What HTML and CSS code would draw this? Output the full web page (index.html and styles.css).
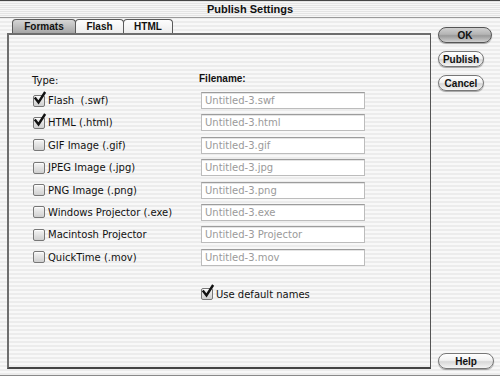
FILE: index.html
```html
<!DOCTYPE html>
<html>
<head>
    <meta charset="UTF-8" />
    <title>Publish Settings</title>
    <link rel="stylesheet" href="styles.css">
</head>

<body>
    <div class="window">
        <div class="title-bar">Publish Settings</div>

        <div class="window-main">
            <div class="tab-area">
                <div class="tab-row">
                    <div class="tab selected">Formats</div>
                    <div class="tab">Flash</div>
                    <div class="tab">HTML</div>
                </div>

                <div class="tab-pane">
                    <div class="format-grid">
                        <div class="col-label">Type:</div>
                        <div class="col-label file-label">Filename:</div>

                        <div class="type-item"><span class="check on"><svg viewBox="0 0 14 14"><path d="M2.5 6.5 L5.5 10.5 L11.5 1" /></svg></span>Flash&nbsp; (.swf)</div>
                        <div class="file-box">Untitled-3.swf</div>

                        <div class="type-item"><span class="check on"><svg viewBox="0 0 14 14"><path d="M2.5 6.5 L5.5 10.5 L11.5 1" /></svg></span>HTML (.html)</div>
                        <div class="file-box">Untitled-3.html</div>

                        <div class="type-item"><span class="check"></span>GIF Image (.gif)</div>
                        <div class="file-box">Untitled-3.gif</div>

                        <div class="type-item"><span class="check"></span>JPEG Image (.jpg)</div>
                        <div class="file-box">Untitled-3.jpg</div>

                        <div class="type-item"><span class="check"></span>PNG Image (.png)</div>
                        <div class="file-box">Untitled-3.png</div>

                        <div class="type-item"><span class="check"></span>Windows Projector (.exe)</div>
                        <div class="file-box">Untitled-3.exe</div>

                        <div class="type-item"><span class="check"></span>Macintosh Projector</div>
                        <div class="file-box">Untitled-3 Projector</div>

                        <div class="type-item"><span class="check"></span>QuickTime (.mov)</div>
                        <div class="file-box">Untitled-3.mov</div>
                    </div>

                    <div class="default-names"><span class="check on"><svg viewBox="0 0 14 14"><path d="M2.5 6.5 L5.5 10.5 L11.5 1" /></svg></span>Use default names</div>
                </div>
            </div>

            <div class="side-buttons">
                <button class="aqua-btn default">OK</button>
                <button class="aqua-btn">Publish</button>
                <button class="aqua-btn">Cancel</button>
                <button class="aqua-btn help-btn">Help</button>
            </div>
        </div>
    </div>
</body>
</html>
```

FILE: styles.css
```css
* {
    margin: 0;
    padding: 0;
    box-sizing: border-box;
    font-family: "DejaVu Sans", "Liberation Sans", sans-serif;
}

body {
    width: 500px;
    height: 376px;
    overflow: hidden;
    background: #fff;
}

.window {
    width: 500px;
    height: 376px;
    display: flex;
    flex-direction: column;
    border-top: 1px solid #444;
    border-bottom: 1px solid #8a8a8a;
    background: repeating-linear-gradient(to bottom, #ececec 0, #ececec 2px, #f8f8f8 2px, #f8f8f8 4px);
}

.title-bar {
    height: 17px;
    line-height: 16px;
    text-align: center;
    font-family: "Liberation Sans", Arial, sans-serif;
    font-size: 11px;
    font-weight: bold;
    color: #111;
    border-bottom: 1px solid #9a9a9a;
    background: repeating-linear-gradient(to bottom, #e4e4e4 0, #e4e4e4 1px, #f6f6f6 1px, #f6f6f6 2px);
}

.window-main {
    flex: 1;
    display: flex;
    padding-bottom: 6px;
}

.tab-area {
    width: 431px;
    display: flex;
    flex-direction: column;
    padding-left: 7px;
    padding-top: 1px;
}

.tab-row {
    display: flex;
    padding-left: 5px;
    height: 14px;
}

.tab {
    height: 14px;
    font-family: "Liberation Sans", Arial, sans-serif;
    font-size: 10px;
    font-weight: bold;
    line-height: 14px;
    text-align: center;
    color: #111;
    border: 1px solid #5a5a5a;
    border-bottom: none;
    border-radius: 4px 4px 0 0;
    background: linear-gradient(to bottom, #fdfdfd, #ececec);
    margin-right: -1px;
}

.tab.selected {
    width: 64px;
    background: linear-gradient(to bottom, #d6d6d6, #a6a6a6);
}

.tab-row .tab:nth-child(2) {
    width: 49px;
}

.tab-row .tab:nth-child(3) {
    width: 50px;
}

.tab-pane {
    flex: 1;
    border-top: 2px solid #6e6e6e;
    border-left: 2px solid #6e6e6e;
    border-right: 1px solid #555;
    border-bottom: 2px solid #444;
    padding: 39px 0 0 23px;
}

.format-grid {
    display: grid;
    grid-template-columns: 167px 166px;
    grid-template-rows: 15px repeat(8, 22.4px);
}

.col-label {
    font-size: 10px;
    line-height: 14px;
    color: #111;
    align-self: start;
}

.file-label {
    font-family: "Liberation Sans", Arial, sans-serif;
    font-weight: bold;
    margin-top: -2px;
}

.type-item {
    display: flex;
    align-items: center;
    height: 17px;
    font-size: 10px;
    color: #111;
    padding-left: 1px;
    margin-top: 3px;
}

.check {
    position: relative;
    width: 12px;
    height: 12px;
    margin-right: 3px;
    border: 1px solid #777;
    border-radius: 2px;
    background: linear-gradient(to bottom, #f4f4f4, #cfcfcf);
    box-shadow: inset 0 1px 1px rgba(255, 255, 255, 0.8);
    flex-shrink: 0;
}

.check svg {
    position: absolute;
    left: -1px;
    top: -4px;
    width: 14px;
    height: 14px;
    overflow: visible;
}

.check svg path {
    fill: none;
    stroke: #111;
    stroke-width: 2.4;
    stroke-linecap: square;
}

.file-box {
    width: 164px;
    height: 17px;
    margin-left: 2px;
    margin-top: 3px;
    padding-left: 3px;
    line-height: 15px;
    font-size: 10px;
    color: #9a9a9a;
    background: #fff;
    border: 1px solid #bcbcbc;
    border-top-color: #9c9c9c;
    box-shadow: inset 0 1px 0 #e4e4e4;
}

.default-names {
    display: flex;
    align-items: center;
    margin-top: 20px;
    margin-left: 169px;
    font-size: 10px;
    color: #111;
}

.side-buttons {
    flex: 1;
    display: flex;
    flex-direction: column;
    align-items: flex-start;
    gap: 8px;
    padding: 9px 0 0 7px;
}

.aqua-btn {
    width: 46px;
    height: 16px;
    font-family: "Liberation Sans", Arial, sans-serif;
    font-size: 10px;
    font-weight: bold;
    color: #111;
    border: 1px solid #777;
    border-radius: 8px;
    background: linear-gradient(to bottom, #ffffff 0%, #f2f2f2 45%, #d8d8d8 55%, #f4f4f4 100%);
    box-shadow: 0 1px 1px rgba(0, 0, 0, 0.35);
    cursor: pointer;
}

.aqua-btn.default {
    width: 54px;
    border-color: #555;
    background: linear-gradient(to bottom, #d0d0d0 0%, #b4b4b4 45%, #9a9a9a 55%, #cfcfcf 100%);
}

.help-btn {
    margin-top: auto;
    width: 56px;
}
```
